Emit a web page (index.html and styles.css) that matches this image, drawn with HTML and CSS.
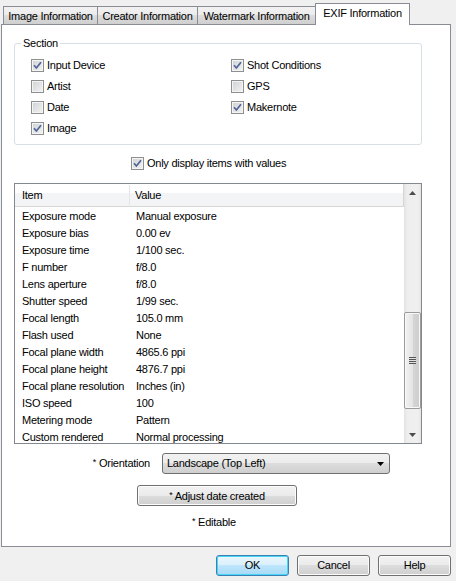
FILE: index.html
```html
<!DOCTYPE html>
<html>
<head>
<meta charset="utf-8">
<link rel="stylesheet" href="styles.css">
</head>
<body>
<div class="tabs">
  <div class="tab t1">Image Information</div>
  <div class="tab t2">Creator Information</div>
  <div class="tab t3">Watermark Information</div>
  <div class="tab sel">EXIF Information</div>
</div>
<div class="panel">
  <fieldset class="group">
    <legend>Section</legend>
    <div class="grid">
      <label class="cb"><span class="box on"><svg viewBox="0 0 11 11" width="11" height="11"><path d="M2 5.2 L4.4 8 L9 2.2" fill="none" stroke="#4f6499" stroke-width="1.7"/></svg></span>Input Device</label>
      <label class="cb"><span class="box on"><svg viewBox="0 0 11 11" width="11" height="11"><path d="M2 5.2 L4.4 8 L9 2.2" fill="none" stroke="#4f6499" stroke-width="1.7"/></svg></span>Shot Conditions</label>
      <label class="cb"><span class="box"></span>Artist</label>
      <label class="cb"><span class="box"></span>GPS</label>
      <label class="cb"><span class="box"></span>Date</label>
      <label class="cb"><span class="box on"><svg viewBox="0 0 11 11" width="11" height="11"><path d="M2 5.2 L4.4 8 L9 2.2" fill="none" stroke="#4f6499" stroke-width="1.7"/></svg></span>Makernote</label>
      <label class="cb"><span class="box on"><svg viewBox="0 0 11 11" width="11" height="11"><path d="M2 5.2 L4.4 8 L9 2.2" fill="none" stroke="#4f6499" stroke-width="1.7"/></svg></span>Image</label>
    </div>
  </fieldset>
  <div class="only">
    <label class="cb"><span class="box on"><svg viewBox="0 0 11 11" width="11" height="11"><path d="M2 5.2 L4.4 8 L9 2.2" fill="none" stroke="#4f6499" stroke-width="1.7"/></svg></span>Only display items with values</label>
  </div>
  <div class="list">
    <div class="listmain">
      <div class="head">
        <div class="c1">Item</div>
        <div class="sep"></div>
        <div class="c2">Value</div>
      </div>
      <div class="rows">
        <div class="row"><div class="c1">Exposure mode</div><div class="c2">Manual exposure</div></div>
        <div class="row"><div class="c1">Exposure bias</div><div class="c2">0.00 ev</div></div>
        <div class="row"><div class="c1">Exposure time</div><div class="c2">1/100 sec.</div></div>
        <div class="row"><div class="c1">F number</div><div class="c2">f/8.0</div></div>
        <div class="row"><div class="c1">Lens aperture</div><div class="c2">f/8.0</div></div>
        <div class="row"><div class="c1">Shutter speed</div><div class="c2">1/99 sec.</div></div>
        <div class="row"><div class="c1">Focal length</div><div class="c2">105.0 mm</div></div>
        <div class="row"><div class="c1">Flash used</div><div class="c2">None</div></div>
        <div class="row"><div class="c1">Focal plane width</div><div class="c2">4865.6 ppi</div></div>
        <div class="row"><div class="c1">Focal plane height</div><div class="c2">4876.7 ppi</div></div>
        <div class="row"><div class="c1">Focal plane resolution</div><div class="c2">Inches (in)</div></div>
        <div class="row"><div class="c1">ISO speed</div><div class="c2">100</div></div>
        <div class="row"><div class="c1">Metering mode</div><div class="c2">Pattern</div></div>
        <div class="row"><div class="c1">Custom rendered</div><div class="c2">Normal processing</div></div>
      </div>
    </div>
    <div class="sb">
      <div class="sbbtn"><svg width="7" height="4" viewBox="0 0 7 4"><path d="M0 4 L3.5 0 L7 4 Z" fill="#4d4d4d"/></svg></div>
      <div class="track">
        <div class="thumb"><span class="grip"></span></div>
      </div>
      <div class="sbbtn"><svg width="7" height="4" viewBox="0 0 7 4"><path d="M0 0 L7 0 L3.5 4 Z" fill="#4d4d4d"/></svg></div>
    </div>
  </div>
  <div class="orient">
    <div class="olabel"><span class="ast">*</span> Orientation</div>
    <div class="select"><span>Landscape (Top Left)</span><svg width="7" height="4" viewBox="0 0 7 4"><path d="M0 0 L7 0 L3.5 4 Z" fill="#000"/></svg></div>
  </div>
  <div class="adjrow"><div class="btn adj"><span><span class="ast">*</span> Adjust date created</span></div></div>
  <div class="editable"><span class="ast">*</span> Editable</div>
</div>
<div class="footer">
  <div class="btn def">OK</div>
  <div class="btn">Cancel</div>
  <div class="btn">Help</div>
</div>
</body>
</html>
```
FILE: styles.css
```css
* { box-sizing: border-box; }
html, body { margin: 0; padding: 0; }
body {
  width: 456px;
  height: 581px;
  background: #f0f0f0;
  font-family: "Liberation Sans", Arial, sans-serif;
  font-size: 11px;
  line-height: 13px;
  letter-spacing: -0.25px;
  color: #000;
  overflow: hidden;
}
.tabs {
  display: flex;
  align-items: flex-end;
  height: 24px;
  padding: 3px 0 0 3px;
  position: relative;
  z-index: 2;
}
.tab {
  height: 18px;
  border: 1px solid #898c95;
  border-bottom: none;
  background: linear-gradient(#f2f2f2, #ebebeb 50%, #dddddd 50%, #cfcfcf);
  display: flex;
  align-items: center;
  justify-content: center;
  white-space: nowrap;
  padding-top: 1px;
}
.t1 { width: 95px; }
.t2 { width: 101px; margin-left: -1px; }
.t3 { width: 119px; margin-left: -1px; }
.tab.sel {
  width: 95px;
  height: 22px;
  margin-left: -1px;
  margin-bottom: -1px;
  background: #fff;
  padding-top: 0;
  padding-bottom: 3px;
}
.panel {
  margin-left: 1px;
  width: 450px;
  height: 523px;
  border: 1px solid #898c95;
  background: #fff;
  position: relative;
  z-index: 1;
}
.group {
  margin: 12px 0 0 12px;
  width: 408px;
  height: 108px;
  border: 1px solid #d5dfe5;
  border-radius: 3px;
  padding: 5px 0 0 16px;
}
.group legend {
  padding: 0 2px;
  margin-left: -10px;
  line-height: 13px;
}
.grid {
  display: grid;
  grid-template-columns: 200px 180px;
  grid-auto-rows: 21px;
}
.cb {
  display: flex;
  align-items: center;
  height: 21px;
  white-space: nowrap;
}
.box {
  width: 13px;
  height: 13px;
  border: 1px solid #8e8f8f;
  background: linear-gradient(135deg, #cfd1d4, #f3f3f3);
  box-shadow: inset 0 0 0 1px #f4f4f4;
  margin-right: 3px;
  display: flex;
  align-items: center;
  justify-content: center;
  flex: none;
}
.box svg { display: block; }
.only {
  margin-top: 8px;
  padding-left: 129px;
}
.list {
  margin: 9px 0 0 12px;
  width: 408px;
  height: 261px;
  border: 1px solid #828790;
  display: flex;
}
.listmain {
  flex: 1;
  overflow: hidden;
}
.head {
  height: 23px;
  display: flex;
  align-items: center;
  background: linear-gradient(#ffffff 0, #ffffff 40%, #f3f4f6 40%, #f3f4f6 100%);
  border-bottom: 1px solid #d5d5d5;
  border-right: 1px solid #d5d5d5;
  padding-top: 1px;
}
.head .c1 { width: 114px; padding-left: 7px; }
.sep { width: 1px; height: 22px; background: #e3e5e7; }
.head .c2 { padding-left: 5px; }
.rows { padding-top: 1px; }
.row {
  display: flex;
  height: 17px;
  align-items: center;
  white-space: nowrap;
}
.row .c1 { width: 121px; padding-left: 7px; }
.row .c2 { padding-left: 0; }
.sb {
  width: 17px;
  flex: none;
  display: flex;
  flex-direction: column;
  background: linear-gradient(90deg, #e3e3e3, #eeeeee 20%, #f0f0f0 80%, #e6e6e6);
}
.sbbtn {
  height: 17px;
  display: flex;
  align-items: center;
  justify-content: center;
}
.track { flex: 1; }
.thumb {
  margin: 111px 0 0 0;
  height: 97px;
  border: 1px solid #9b9b9b;
  border-radius: 2px;
  background: linear-gradient(90deg, #f2f2f2, #e4e4e4 50%, #d5d5d5 50%, #cdcdcd);
  box-shadow: inset 0 0 0 1px #f8f8f8;
  display: flex;
  align-items: center;
  justify-content: center;
}
.grip {
  width: 7px;
  height: 7px;
  background: repeating-linear-gradient(#555 0, #555 1px, #e0e0e0 1px, #e0e0e0 2px);
}
.orient {
  margin-top: 9px;
  display: grid;
  grid-template-columns: 148px 228px;
  column-gap: 12px;
  align-items: center;
}
.olabel { text-align: right; white-space: nowrap; padding-bottom: 2px; }
.ast { font-size: 9px; vertical-align: 2px; }
.select {
  height: 21px;
  border: 1px solid #707070;
  border-radius: 3px;
  background: linear-gradient(#f2f2f2, #ebebeb 50%, #dddddd 50%, #cfcfcf);
  display: flex;
  align-items: center;
  justify-content: space-between;
  padding: 0 5px 0 4px;
}
.adjrow { margin-top: 11px; padding-left: 135px; }
.btn {
  height: 21px;
  border: 1px solid #707070;
  border-radius: 3px;
  background: linear-gradient(#f2f2f2, #ebebeb 50%, #dddddd 50%, #cfcfcf);
  box-shadow: inset 0 0 0 1px #fcfcfc;
  display: flex;
  align-items: center;
  justify-content: center;
  white-space: nowrap;
}
.adj { width: 160px; }
.editable {
  margin-top: 9px;
  padding-left: 190px;
  white-space: nowrap;
}
.footer {
  margin-top: 8px;
  display: flex;
  justify-content: flex-end;
  gap: 8px;
  padding-right: 5px;
}
.footer .btn { width: 73px; }
.btn.def {
  border-color: #3c7fb1;
  background: linear-gradient(#eaf6fd, #d9f0fc 50%, #bee6fd 50%, #a7d9f5);
  box-shadow: inset 0 0 0 1px #48d6f8;
}
```
